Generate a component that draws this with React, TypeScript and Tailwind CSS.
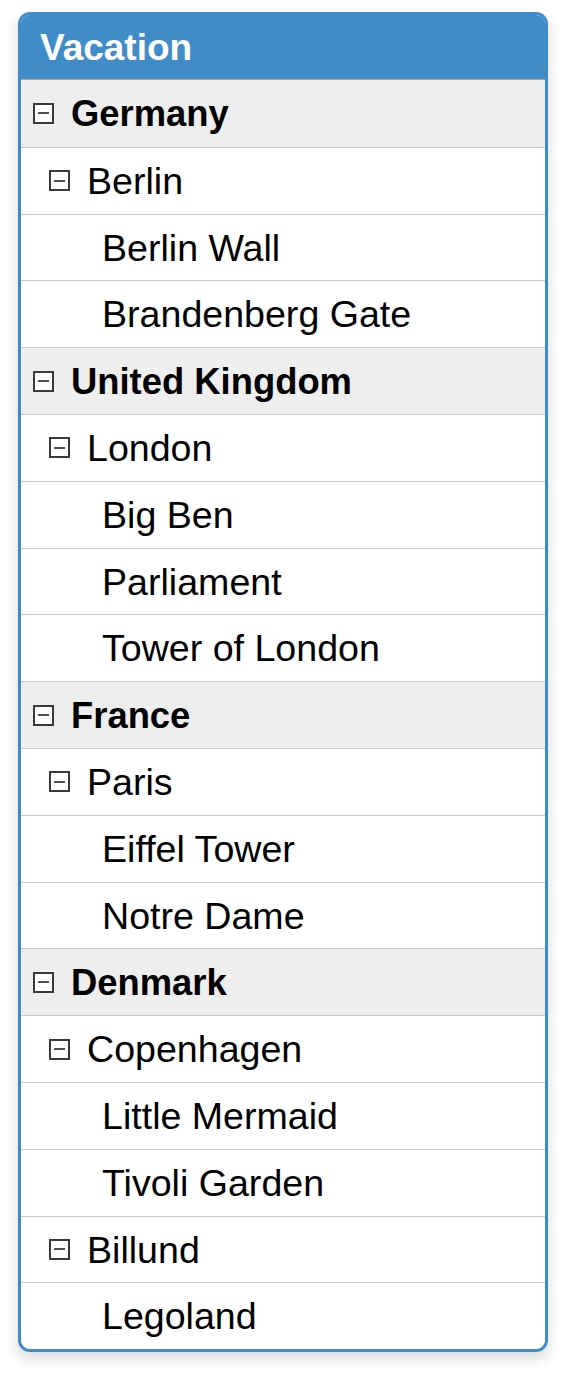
import React from "react";

interface Place {
  name: string;
  sights: string[];
}

interface Country {
  name: string;
  cities: Place[];
}

const trips: Country[] = [
  { name: "Germany", cities: [{ name: "Berlin", sights: ["Berlin Wall", "Brandenberg Gate"] }] },
  { name: "United Kingdom", cities: [{ name: "London", sights: ["Big Ben", "Parliament", "Tower of London"] }] },
  { name: "France", cities: [{ name: "Paris", sights: ["Eiffel Tower", "Notre Dame"] }] },
  {
    name: "Denmark",
    cities: [
      { name: "Copenhagen", sights: ["Little Mermaid", "Tivoli Garden"] },
      { name: "Billund", sights: ["Legoland"] },
    ],
  },
];

const Minus = () => (
  <span className="flex items-center justify-center w-[21px] h-[21px] border-2 border-[#3a3a3a] bg-white shrink-0">
    <span className="block w-[11px] h-[2px] bg-[#505050]"></span>
  </span>
);

const Row = ({ children, className }: { children: React.ReactNode; className: string }) => (
  <div className={"flex items-center h-[66.8px] border-t border-[#c8c8c8] " + className}>{children}</div>
);

export default function App() {
  return (
    <div className="min-h-screen bg-white pt-[12px] px-[18px]" style={{ fontFamily: '"Liberation Sans", Arial, sans-serif' }}>
      <div className="border-[3px] border-[#3f8cc9] rounded-[12px] overflow-hidden shadow-[0_6px_14px_rgba(0,0,0,0.16)]">
        <div className="bg-[#3f8cc9] h-[65px] flex items-center pl-[19px] pt-[2px] text-white font-bold text-[37px] border-b border-[#a9a9a9]">
          Vacation
        </div>
        <div className="bg-white text-black text-[37.6px] leading-none">
          {trips.map((country, ci) => (
            <React.Fragment key={country.name}>
              <Row className={"bg-[#eeeeee] pl-[12px] gap-[17px] font-bold text-[36.4px]" + (ci === 0 ? " border-t-0" : "")}>
                <Minus />
                <span className="pt-[2px]">{country.name}</span>
              </Row>
              {country.cities.map((city) => (
                <React.Fragment key={city.name}>
                  <Row className="pl-[28px] gap-[17px]">
                    <Minus />
                    <span className="pt-[2px]">{city.name}</span>
                  </Row>
                  {city.sights.map((s) => (
                    <Row key={s} className="pl-[81px]">
                      <span className="pt-[2px]">{s}</span>
                    </Row>
                  ))}
                </React.Fragment>
              ))}
            </React.Fragment>
          ))}
        </div>
      </div>
    </div>
  );
}
